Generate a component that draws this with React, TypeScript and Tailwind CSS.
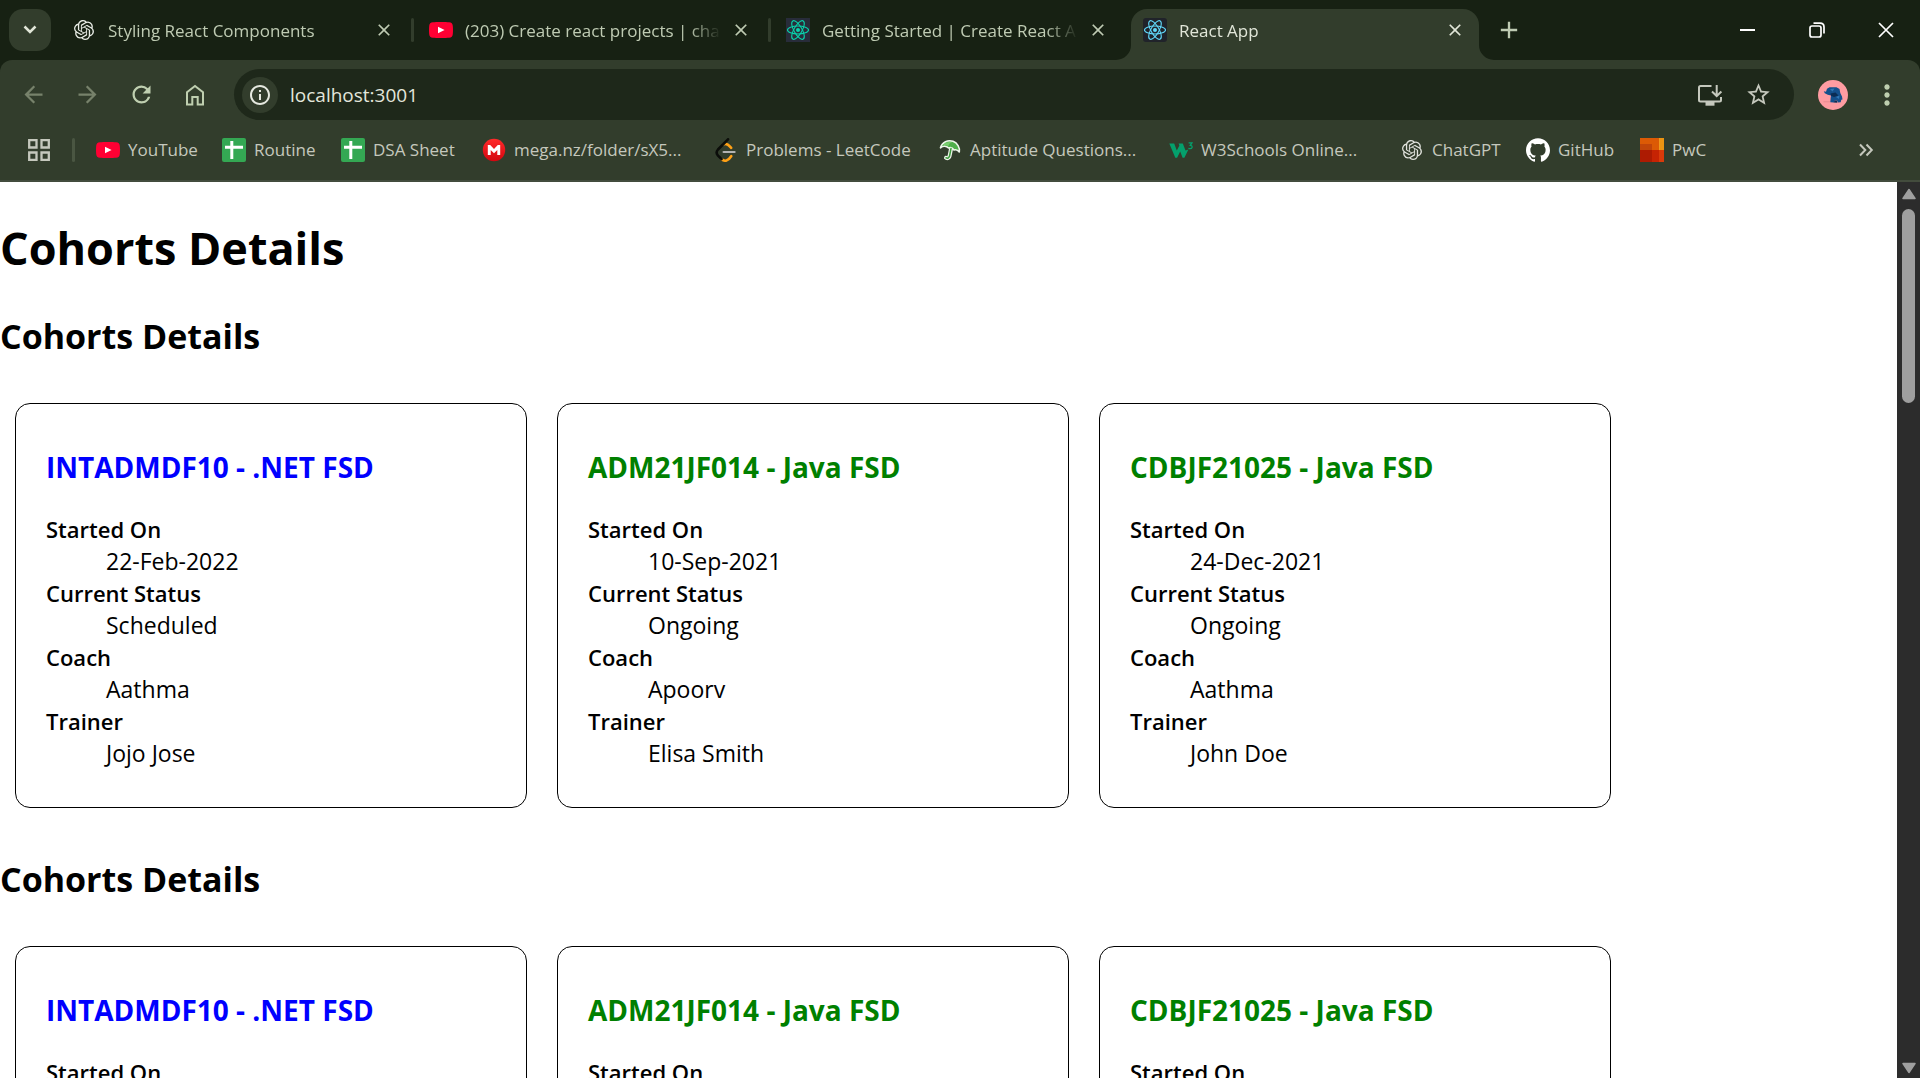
import React from 'react';
import { SiOpenai, SiGithub } from 'react-icons/si';
import {
  MdArrowBack,
  MdArrowForward,
  MdRefresh,
  MdStarBorder,
  MdMoreVert,
  MdInfoOutline,
  MdClose,
  MdAdd,
} from 'react-icons/md';

/* ---------- logos ---------- */

function YouTubeLogo() {
  return (
    <svg viewBox="0 0 24 24" className="size-6 shrink-0" aria-hidden="true">
      <path
        fill="#ff0033"
        d="M4 4.2C6.500 3.900 17.500 3.900 20 4.200C22.500 4.400 23.700 5.600 23.800 8C24.050 10.500 24.050 13.500 23.800 16C23.700 18.400 22.500 19.600 20 19.800C17.500 20.100 6.500 20.100 4 19.800C1.500 19.600 .3 18.400 .2 16C-.05 13.500 -.05 10.500 .2 8C.3 5.600 1.500 4.400 4 4.200Z"
      />
      <path fill="#fff" d="M9 8.700L15.600 12L9 15.300Z" />
    </svg>
  );
}

function ReactLogo({ color, background, rounded }: { color: string; background: string; rounded: number }) {
  return (
    <svg viewBox="0 0 24 24" className="size-6 shrink-0" aria-hidden="true">
      <rect width="24" height="24" rx={rounded} fill={background} />
      <circle cx="12" cy="12" r="2" fill={color} />
      <g fill="none" stroke={color} strokeWidth="1.100">
        <ellipse cx="12" cy="12" rx="10.500" ry="4" />
        <ellipse cx="12" cy="12" rx="10.500" ry="4" transform="rotate(60 12 12)" />
        <ellipse cx="12" cy="12" rx="10.500" ry="4" transform="rotate(120 12 12)" />
      </g>
    </svg>
  );
}

function SheetLogo() {
  return (
    <svg viewBox="0 0 24 24" className="size-6 shrink-0" aria-hidden="true">
      <rect width="24" height="24" rx="2" fill="#34a853" />
      <path fill="#fff" d="M3 7.700h5.300V3h3v4.700H21v3h-9.700V21h-3V10.700H3Z" />
    </svg>
  );
}

function MegaLogo() {
  return (
    <svg viewBox="0 0 24 24" className="size-6 shrink-0" aria-hidden="true">
      <defs>
        <linearGradient id="mega" x1="0" y1="0" x2="0" y2="1">
          <stop offset="0" stopColor="#ff2a2a" />
          <stop offset="1" stopColor="#d3060f" />
        </linearGradient>
      </defs>
      <circle cx="12" cy="12" r="11.200" fill="url(#mega)" />
      <path fill="#fff" d="M5.800 17V7h2.400L12 10.900L15.800 7h2.400v10h-2.900v-5L12 15.200L8.700 12v5Z" />
    </svg>
  );
}

function LeetCodeLogo() {
  return (
    <svg viewBox="0 0 24 24" className="size-6 shrink-0" aria-hidden="true">
      <g fill="none" strokeWidth="2.600" strokeLinecap="round">
        <path stroke="#ffa116" d="M9.500 6.300Q12.500 4.600 17.200 9.800" />
        <path stroke="#ffa116" d="M7.500 21Q12.500 25.500 17.200 18.200" />
        <path stroke="#0b0d0a" d="M14 1.300L4 11.500Q1.300 14.500 4 17.700L7.500 21" />
        <path stroke="#b3b3b3" strokeWidth="2.200" d="M9.600 14H20.600" />
      </g>
    </svg>
  );
}

function UmbrellaLogo() {
  return (
    <svg viewBox="0 0 24 24" className="size-6 shrink-0" aria-hidden="true">
      <path
        fill="none"
        stroke="#eef5ea"
        strokeWidth="4"
        strokeLinecap="round"
        d="M13 11L11.500 18.300Q10.500 21 8 19.800"
      />
      <path
        fill="#4fae4a"
        stroke="#eef5ea"
        strokeWidth="1.600"
        strokeLinejoin="round"
        d="M2.500 9.800C4 4 10 1.500 15 3.300C19.500 5 22 9.500 21.300 14C19.600 11.800 17.500 11.400 16 12C14.500 9.600 12.500 9 10.500 10C8.500 7.800 5 7.600 2.500 9.800Z"
      />
      <path fill="none" stroke="#3d9b3c" strokeWidth="1.500" strokeLinecap="round" d="M13 10.500L11.500 18.300Q10.500 21 8 19.800" />
      <path fill="#78cc6c" d="M4.500 7.500C7 4.200 11 3.500 14.500 4.300C11.500 4.800 10.500 6.500 10.400 8.300C8.700 7 6.500 6.700 4.500 7.500Z" />
    </svg>
  );
}

function W3Logo() {
  return (
    <svg viewBox="0 0 24 24" className="size-6 shrink-0" aria-hidden="true">
      <path fill="#04a06c" d="M.3 5.600H5.200L7.800 12.500L10.400 7.600L9.600 5.600H13.800L16.500 12.500L19.400 11.500L15.400 19.800H13.600L11.200 13.500L8.100 19.800H6.300Z" />
      <path fill="none" stroke="#04a06c" strokeWidth="1.300" d="M19.600 4.900H23L21.300 7.300Q23.300 7.500 23.100 9.200Q22.500 11.200 19.400 10.300" />
    </svg>
  );
}

function PwcLogo() {
  return (
    <svg viewBox="0 0 24 24" className="size-6 shrink-0" shapeRendering="crispEdges" aria-hidden="true">
      <rect width="24" height="24" fill="#ad1b02" />
      <rect width="24" height="12" fill="#dc5a05" />
      <rect y="6" width="12" height="6" fill="#c14509" />
      <rect x="20" width="4" height="12" fill="#eb9312" />
      <rect x="19" width="1" height="12" fill="#f09a1c" />
      <rect x="12" y="12" width="7" height="12" fill="#c62303" />
      <rect x="19" y="12" width="5" height="12" fill="#d93a0a" />
    </svg>
  );
}

function HomeIcon() {
  return (
    <svg viewBox="0 0 24 24" className="size-6" fill="none" stroke="currentColor" strokeWidth="2" aria-hidden="true">
      <path d="M4 21.500V9.300L12 3L20 9.300V21.500H14.700V14H9.300V21.500Z" />
    </svg>
  );
}

function InstallIcon() {
  return (
    <svg viewBox="0 0 26 24" className="h-6 w-[26px]" aria-hidden="true">
      <g fill="none" stroke="currentColor" strokeWidth="2">
        <path d="M14.500 3H3.500Q2 3 2 4.500V17Q2 18.500 3.500 18.500H22.500Q24 18.500 24 17V14" />
        <path d="M19.700 2V12.500M15 8.500L19.700 13L24.400 8.500" />
      </g>
      <path fill="currentColor" d="M8.500 19H17.500V22.700H8.500Z" />
    </svg>
  );
}

function Avatar() {
  return (
    <svg viewBox="0 0 30 30" className="size-[30px]" aria-hidden="true">
      <circle cx="15" cy="15" r="15" fill="#ff9ca2" />
      <path
        fill="#14508c"
        d="M5.800 11.300L8 11.800L9 8.800L11.500 7.300L18.500 7.300L21.500 9L22.300 13L24 16.500L24.500 19.500L23.300 19.800L22.700 22.300L19.800 22.500L19 20.500L16.800 20.500L16 22.500L12.300 22.300L12.600 18.500L13 15.500L9.800 14.800L6.800 13.300Z"
      />
      <path fill="#0a2d55" d="M12.500 13.500L17.500 12.500L20.500 15.500L16 17L13 15.800ZM15.700 22.500L16.700 20.500H18.800L19.300 22.700Z" />
      <path fill="#2f76b5" d="M12 9L16.500 8.500L14.500 11.500ZM18 17L21.500 15.500L21 19Z" />
      <path stroke="#e98a90" strokeWidth="1" d="M5.500 21.800H12" />
    </svg>
  );
}

/* ---------- browser frame ---------- */

type Tab = { title: string; icon: React.ReactNode; active?: boolean };

const tabs: Tab[] = [
  { title: 'Styling React Components', icon: <SiOpenai className="mx-0.5 size-5 shrink-0 text-[#e9ede6]" /> },
  { title: '(203) Create react projects | cha', icon: <YouTubeLogo /> },
  {
    title: 'Getting Started | Create React A',
    icon: <ReactLogo color="#09d3ac" background="#282c3a" rounded={0} />,
  },
  { title: 'React App', icon: <ReactLogo color="#61dafb" background="#20232a" rounded={3} />, active: true },
];

function Flare({ side }: { side: 'left' | 'right' }) {
  return (
    <svg
      viewBox="0 0 15 15"
      aria-hidden="true"
      className={
        side === 'left'
          ? 'absolute right-full bottom-0 size-[15px]'
          : 'absolute bottom-0 left-full size-[15px] -scale-x-100'
      }
    >
      <path fill="#323d2c" d="M15 0V15H0A15 15 0 0 0 15 0Z" />
    </svg>
  );
}

function BrowserTab({ tab }: { tab: Tab }) {
  return (
    <div
      className={
        tab.active
          ? 'relative flex h-[51px] w-[348px] items-center rounded-t-2xl bg-[#323d2c] px-3 pb-[9px] text-[#e1e6d8]'
          : 'flex h-[51px] w-[348px] items-center px-3 pb-[9px] text-[#bfcbb3]'
      }
    >
      {tab.active && <Flare side="left" />}
      {tab.icon}
      <span className="mr-2.5 ml-3 min-w-0 flex-1 overflow-hidden pt-0.5 text-[17px] leading-6 whitespace-nowrap [mask-image:linear-gradient(to_right,#000_224px,transparent_256px)]">
        {tab.title}
      </span>
      <button type="button" aria-label={`Close ${tab.title}`} className="flex size-6 items-center justify-center">
        <MdClose className="size-5" />
      </button>
      {tab.active && <Flare side="right" />}
    </div>
  );
}

function TabStrip() {
  return (
    <div className="flex h-[60px] shrink-0 bg-[#172113] pt-[9px]">
      <button
        type="button"
        aria-label="Search tabs"
        className="mr-[9px] ml-[9px] flex size-[42px] items-center justify-center rounded-[14px] bg-[#323d2c] text-[#e1e6d8]"
      >
        <svg viewBox="0 0 14 10" className="h-2.5 w-3.5" fill="none" stroke="currentColor" strokeWidth="2.500">
          <path d="M1.500 1.500L7 7L12.500 1.500" />
        </svg>
      </button>
      {tabs.map((tab, i) => (
        <React.Fragment key={tab.title}>
          {i > 0 && (
            <span className={i < 3 ? 'mx-[3px] mt-[9px] h-6 w-[3px] rounded-sm bg-[#323d2c]' : 'w-[9px]'} />
          )}
          <BrowserTab tab={tab} />
        </React.Fragment>
      ))}
      <button
        type="button"
        aria-label="New tab"
        className="ml-[9px] flex size-[42px] items-center justify-center text-[#bfcbb3]"
      >
        <MdAdd className="size-7" />
      </button>
      <div className="-mt-[9px] ml-auto flex text-white">
        <button type="button" aria-label="Minimize" className="flex h-[60px] w-[69px] items-center justify-center">
          <span className="h-0.5 w-[15px] bg-white" />
        </button>
        <button type="button" aria-label="Restore" className="flex h-[60px] w-[69px] items-center justify-center">
          <svg viewBox="0 0 16 16" className="size-4" fill="none" stroke="currentColor" strokeWidth="1.700">
            <rect x="1" y="4" width="11" height="11" rx="2" />
            <path d="M4.500 1.200H11Q15 1.200 15 5V11.500" />
          </svg>
        </button>
        <button type="button" aria-label="Close window" className="flex h-[60px] w-[69px] items-center justify-center">
          <svg viewBox="0 0 16 16" className="size-4" fill="none" stroke="currentColor" strokeWidth="1.700">
            <path d="M1 1L15 15M15 1L1 15" />
          </svg>
        </button>
      </div>
    </div>
  );
}

function NavButton({ label, className, children }: { label: string; className: string; children: React.ReactNode }) {
  return (
    <button type="button" aria-label={label} className={`flex h-[51px] w-[54px] items-center justify-center ${className}`}>
      {children}
    </button>
  );
}

function Toolbar() {
  return (
    <div className="flex items-center px-1.5 pt-[9px]">
      <NavButton label="Back" className="text-[#77826b]">
        <MdArrowBack className="size-[27px]" />
      </NavButton>
      <NavButton label="Forward" className="text-[#77826b]">
        <MdArrowForward className="size-[27px]" />
      </NavButton>
      <NavButton label="Reload" className="text-[#bfcfb0]">
        <MdRefresh className="size-[27px]" />
      </NavButton>
      <NavButton label="Home" className="text-[#bfcfb0]">
        <HomeIcon />
      </NavButton>
      <div className="mx-3 flex h-[51px] flex-1 items-center rounded-full bg-[#1e281a] pr-3 pl-2 text-[#c5c8bd]">
        <button
          type="button"
          aria-label="Site information"
          className="flex size-9 items-center justify-center rounded-full bg-[#323d2c] text-[#e6e9e0]"
        >
          <MdInfoOutline className="size-6" />
        </button>
        <input
          type="text"
          aria-label="Address"
          defaultValue="localhost:3001"
          className="ml-3 min-w-0 flex-1 bg-transparent text-[19px] leading-7 text-[#e3e6dc] outline-none"
        />
        <button type="button" aria-label="Install app" className="flex w-12 items-center justify-center">
          <InstallIcon />
        </button>
        <button type="button" aria-label="Bookmark this page" className="flex w-12 items-center justify-center">
          <MdStarBorder className="size-[27px]" />
        </button>
      </div>
      <NavButton label="Profile" className="">
        <Avatar />
      </NavButton>
      <NavButton label="Menu" className="text-[#bfcfb0]">
        <MdMoreVert className="size-8" />
      </NavButton>
    </div>
  );
}

const bookmarks: { title: string; icon: React.ReactNode; width: string }[] = [
  { title: 'YouTube', icon: <YouTubeLogo />, width: 'w-[126px]' },
  { title: 'Routine', icon: <SheetLogo />, width: 'w-[119px]' },
  { title: 'DSA Sheet', icon: <SheetLogo />, width: 'w-[141px]' },
  { title: 'mega.nz/folder/sX5...', icon: <MegaLogo />, width: 'w-[232px]' },
  { title: 'Problems - LeetCode', icon: <LeetCodeLogo />, width: 'w-[224px]' },
  { title: 'Aptitude Questions...', icon: <UmbrellaLogo />, width: 'w-[231px]' },
  { title: 'W3Schools Online...', icon: <W3Logo />, width: 'w-[231px]' },
  {
    title: 'ChatGPT',
    icon: <SiOpenai className="mx-0.5 size-5 shrink-0 text-[#e1e3dd]" />,
    width: 'w-[126px]',
  },
  { title: 'GitHub', icon: <SiGithub className="size-6 shrink-0 text-white" />, width: 'w-[114px]' },
  { title: 'PwC', icon: <PwcLogo />, width: 'w-[92px]' },
];

function BookmarkBar() {
  return (
    <nav aria-label="Bookmarks" className="flex h-[60px] items-center pl-[27px] text-[#c5c8bd]">
      <button type="button" aria-label="Apps">
        <svg viewBox="0 0 24 24" className="size-6" fill="none" stroke="currentColor" strokeWidth="2.300">
          <path d="M2.200 2.200h7.300v7.300H2.200ZM14.500 2.200h7.300v7.300H14.500ZM2.200 14.500h7.300v7.300H2.200ZM14.500 14.500h7.300v7.300H14.500Z" />
        </svg>
      </button>
      <span className="mr-[21px] ml-[21px] h-6 w-[3px] rounded-sm bg-[#4a5642]" />
      {bookmarks.map((b) => (
        <a key={b.title} href="#" className={`flex shrink-0 items-center gap-2 ${b.width}`}>
          {b.icon}
          <span className="text-[17px] leading-6 whitespace-nowrap">{b.title}</span>
        </a>
      ))}
      <button type="button" aria-label="More bookmarks" className="mr-[46px] ml-auto">
        <svg viewBox="0 0 16 14" className="h-3.5 w-4" fill="none" stroke="currentColor" strokeWidth="2">
          <path d="M2 1.500L7.300 7L2 12.500M8.500 1.500L13.800 7L8.500 12.500" />
        </svg>
      </button>
    </nav>
  );
}

/* ---------- page ---------- */

type Cohort = { name: string; startedOn: string; status: string; coach: string; trainer: string };

const cohorts: Cohort[] = [
  { name: 'INTADMDF10 - .NET FSD', startedOn: '22-Feb-2022', status: 'Scheduled', coach: 'Aathma', trainer: 'Jojo Jose' },
  { name: 'ADM21JF014 - Java FSD', startedOn: '10-Sep-2021', status: 'Ongoing', coach: 'Apoorv', trainer: 'Elisa Smith' },
  { name: 'CDBJF21025 - Java FSD', startedOn: '24-Dec-2021', status: 'Ongoing', coach: 'Aathma', trainer: 'John Doe' },
];

function CohortCard({ cohort }: { cohort: Cohort }) {
  const rows = [
    ['Started On', cohort.startedOn],
    ['Current Status', cohort.status],
    ['Coach', cohort.coach],
    ['Trainer', cohort.trainer],
  ];
  return (
    <article className="w-[512px] shrink-0 rounded-[15px] border border-black px-[30px] pt-[45px] pb-[38px]">
      <h3
        className={
          cohort.status === 'Scheduled'
            ? 'text-[28px] leading-9 font-bold text-[#0000ff]'
            : 'text-[28px] leading-9 font-bold text-[#008000]'
        }
      >
        {cohort.name}
      </h3>
      <dl className="mt-7">
        {rows.map(([term, value]) => (
          <React.Fragment key={term}>
            <dt className="text-[22px] leading-8 font-semibold">{term}</dt>
            <dd className="ml-[60px] text-[23px] leading-8">{value}</dd>
          </React.Fragment>
        ))}
      </dl>
    </article>
  );
}

function CohortSection() {
  return (
    <section className="mb-[47px]">
      <h2 className="text-[34px] leading-[48px] font-bold">Cohorts Details</h2>
      <div className="mt-[43px] flex gap-[30px] px-[15px]">
        {cohorts.map((c) => (
          <CohortCard key={c.name} cohort={c} />
        ))}
      </div>
    </section>
  );
}

function Scrollbar() {
  return (
    <div className="flex w-[23px] shrink-0 flex-col items-center bg-[#2c2c2c] text-[#9f9f9f]">
      <svg viewBox="0 0 14 12" className="mt-1.5 h-3 w-3.5" aria-hidden="true">
        <path fill="currentColor" stroke="currentColor" strokeWidth="1.500" strokeLinejoin="round" d="M7 1.500L13 10.500H1Z" />
      </svg>
      <div className="mt-[9px] h-[194px] w-[13px] rounded-full bg-[#9f9f9f]" />
      <svg viewBox="0 0 14 12" className="mt-auto mb-1 h-3 w-3.5" aria-hidden="true">
        <path fill="currentColor" stroke="currentColor" strokeWidth="1.500" strokeLinejoin="round" d="M7 10.500L1 1.500H13Z" />
      </svg>
    </div>
  );
}

export default function App() {
  return (
    <div className="flex h-screen flex-col overflow-hidden bg-white font-['Open_Sans','Noto_Sans',sans-serif] text-black">
      <TabStrip />
      <header className="shrink-0 bg-[#172113]">
        <div className="rounded-t-xl border-b-2 border-[#434c3d] bg-[#323d2c]">
          <Toolbar />
          <BookmarkBar />
        </div>
      </header>
      <div className="flex min-h-0 flex-1">
        <main className="min-w-0 flex-1 overflow-hidden pt-[34px]">
          <h1 className="mb-8 text-[45px] leading-[64px] font-bold">Cohorts Details</h1>
          <CohortSection />
          <CohortSection />
        </main>
        <Scrollbar />
      </div>
    </div>
  );
}
